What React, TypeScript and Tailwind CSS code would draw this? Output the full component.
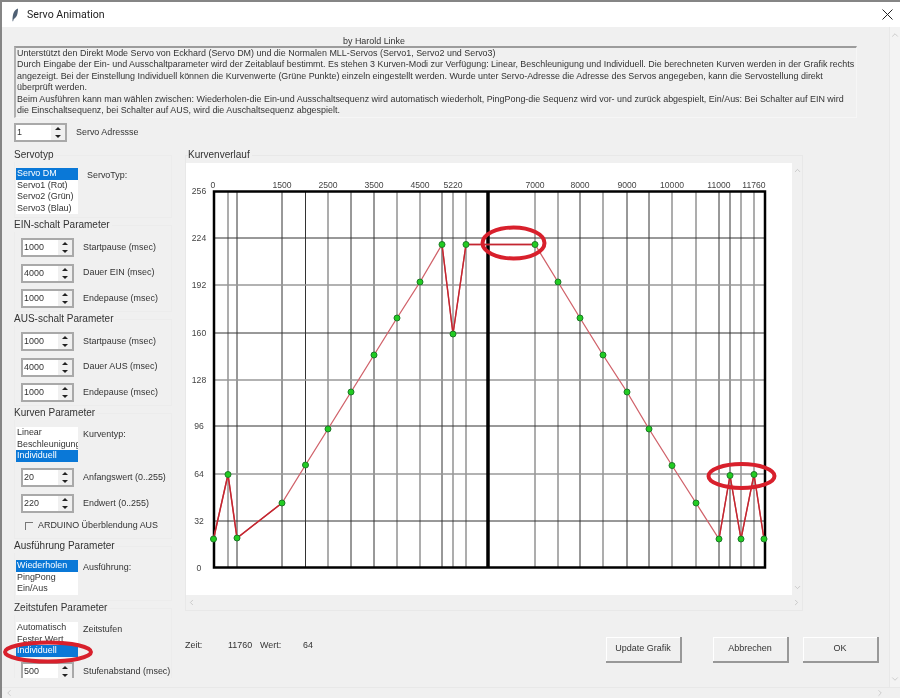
import React from 'react';
import { ChevronDown, ChevronLeft, ChevronRight, ChevronUp } from 'lucide-react';

const description = [
  'Unterstützt den Direkt Mode Servo von Eckhard (Servo DM) und die Normalen MLL-Servos (Servo1, Servo2 und Servo3)',
  'Durch Eingabe der Ein- und Ausschaltparameter wird der Zeitablauf bestimmt. Es stehen 3 Kurven-Modi zur Verfügung: Linear, Beschleunigung und Individuell. Die berechneten Kurven werden in der Grafik rechts',
  'angezeigt. Bei der Einstellung Individuell können die Kurvenwerte (Grüne Punkte) einzeln eingestellt werden. Wurde unter Servo-Adresse die Adresse des Servos angegeben, kann die Servostellung direkt',
  'überprüft werden.',
  'Beim Ausführen kann man wählen zwischen: Wiederholen-die Ein-und Ausschaltsequenz wird automatisch wiederholt, PingPong-die Sequenz wird vor- und zurück abgespielt, Ein/Aus: Bei Schalter auf EIN wird',
  'die Einschaltsequenz, bei Schalter auf AUS, wird die Auschaltsequenz abgespielt.'
];

// x position, dark = thin black line, otherwise the thick grey one
const verticals: [number, boolean][] = [
  [228, false], [237, true], [282, true], [305.5, true], [328, false], [351, true], [374, true], [397, false],
  [420, false], [442, true], [453, false], [466, false], [535, false], [558, false], [580, true], [603, false],
  [627, true], [649, true], [672, false], [696, false], [719, true], [730, true], [741, false], [754, false]
];
const horizontals: [number, boolean, string][] = [
  [238, true, '224'], [285, false, '192'], [333, true, '160'], [380, false, '128'],
  [426, true, '96'], [474, false, '64'], [521, true, '32']
];
const topLabels: [number, string][] = [
  [213, '0'], [282, '1500'], [328, '2500'], [374, '3500'], [420, '4500'], [453, '5220'],
  [535, '7000'], [580, '8000'], [627, '9000'], [672, '10000'], [719, '11000'], [754, '11760']
];
const points: [number, number][] = [
  [213.5, 539], [228, 474.5], [237, 538], [282, 503], [305.5, 465], [328, 429], [351, 392], [374, 355], [397, 318],
  [420, 282], [442, 244.5], [453, 334], [466, 244.5], [535, 244.5], [558, 282], [580, 318], [603, 355], [627, 392],
  [649, 429], [672, 465.5], [696, 503], [719, 539], [730, 475.5], [741, 539], [754, 474.5], [764, 539]
];

const toPolyline = (list: [number, number][]) => list.map(([x, y]) => `${x},${y}`).join(' ');

const Spin: React.FC<{ value: string; className?: string }> = ({ value, className = '' }) => (
  <div className={`flex h-[19px] w-[53px] shrink-0 border-2 border-[#a9a9a9] bg-white ${className}`}>
    <div className="flex-1 pl-[1px] leading-[15px]">{value}</div>
    <div className="flex w-[14px] flex-col justify-between bg-[#f0f0f0]">
      <div className="mx-auto mt-[2px] h-0 w-0 border-x-[3px] border-b-[3px] border-x-transparent border-b-[#222]" />
      <div className="mx-auto mb-[2px] h-0 w-0 border-x-[3px] border-t-[3px] border-x-transparent border-t-[#222]" />
    </div>
  </div>
);

const SpinRow: React.FC<{ value: string; label: string; className?: string }> = ({ value, label, className = '' }) => (
  <div className={`ml-[6px] flex items-center gap-[9px] ${className}`}>
    <Spin value={value} />
    <span className="whitespace-nowrap">{label}</span>
  </div>
);

const ListRow: React.FC<{ items: string[]; selected: number; label: string; heightClass: string; labelClass?: string }> = ({
  items,
  selected,
  label,
  heightClass,
  labelClass = 'ml-[5px]'
}) => (
  <div className="ml-[1px] flex items-start">
    <div className={`w-[62px] overflow-hidden bg-white leading-[11.7px] ${heightClass}`}>
      {items.map((item, i) => (
        <div key={item} className={`whitespace-nowrap pl-[1px] ${i === selected ? 'bg-[#0a78d7] text-white' : ''}`}>
          {item}
        </div>
      ))}
    </div>
    <span className={`mt-[1px] whitespace-nowrap ${labelClass}`}>{label}</span>
  </div>
);

const Group: React.FC<{ title: string; bodyClass: string; children: React.ReactNode }> = ({
  title,
  bodyClass,
  children
}) => (
  <div>
    <div className="relative z-10 h-[14px] w-fit bg-[#f0f0f0] pr-[2px] text-[10px] leading-[14px]">{title}</div>
    <div className={`-mt-[7px] border border-[#ececec] ${bodyClass}`}>{children}</div>
  </div>
);

const Button: React.FC<{ label: string }> = ({ label }) => (
  <button className="h-[26px] w-[76px] border-r-2 border-b-2 border-[#989898] bg-[#f0f0f0] text-[9px] text-[#333] shadow-[inset_1px_1px_0_#fff]">
    {label}
  </button>
);

const Curve: React.FC = () => (
  <svg width="606" height="432" viewBox="186 163 606 432" className="block">
    {verticals.map(([x, dark]) => (
      <line key={x} x1={x} x2={x} y1="191" y2="568" stroke={dark ? '#333' : '#999'} strokeWidth={dark ? 1 : 1.6} />
    ))}
    {horizontals.map(([y, dark]) => (
      <line key={y} x1="213" x2="765" y1={y} y2={y} stroke={dark ? '#333' : '#999'} strokeWidth={dark ? 1 : 1.6} />
    ))}
    <rect x="214" y="191.5" width="551" height="376" fill="none" stroke="#000" strokeWidth="2.5" />
    <line x1="488" x2="488" y1="191" y2="568" stroke="#000" strokeWidth="3.5" />

    <g fontSize="8.6" fill="#444" textAnchor="middle">
      {topLabels.map(([x, t]) => (
        <text key={t} x={x} y="188">{t}</text>
      ))}
      <text x="199" y="194">256</text>
      {horizontals.map(([y, , t]) => (
        <text key={t} x="199" y={y + 3}>{t}</text>
      ))}
      <text x="199" y="571">0</text>
    </g>

    <polyline points={toPolyline(points)} fill="none" stroke="#d0626a" strokeWidth="1.3" />
    <polyline points={toPolyline(points.slice(0, 4))} fill="none" stroke="#c42630" strokeWidth="1.5" />
    <polyline points={toPolyline(points.slice(10, 14))} fill="none" stroke="#c42630" strokeWidth="1.4" />
    <polyline points={toPolyline(points.slice(21))} fill="none" stroke="#c42630" strokeWidth="1.4" />
    {points.map(([x, y]) => (
      <circle key={`${x}-${y}`} cx={x} cy={y} r="3" fill="#22cc22" stroke="#1d7a28" strokeWidth="1" />
    ))}

    <ellipse cx="513.5" cy="243" rx="31" ry="15.5" fill="none" stroke="#d8202c" strokeWidth="4" />
    <ellipse cx="741.5" cy="476" rx="33" ry="12" fill="none" stroke="#d8202c" strokeWidth="4" />
  </svg>
);

export default function App() {
  return (
    <div className="relative h-[698px] w-[900px] overflow-hidden border-t-2 border-l-2 border-[#858585] bg-[#f0f0f0] font-['Liberation_Sans',Arial,sans-serif] text-[8.93px] text-[#333] blur-[0.4px]">
      {/* title bar */}
      <div className="flex h-[25px] items-center bg-white pl-[10px]">
        <svg width="7" height="14" viewBox="0 0 7 14" className="mt-[1px]">
          <path d="M0.5 13 C0.5 7 1.5 2 6 0.5 C6 5 5 9.5 1.8 11 L1 13.5 Z" fill="#4f6074" />
        </svg>
        <span className="ml-[8px] font-['Roboto',sans-serif] text-[10.6px] text-[#222]">Servo Animation</span>
        <svg width="11" height="11" viewBox="0 0 11 11" className="ml-auto mr-[7px]">
          <path d="M0.5 0.5 L10.5 10.5 M10.5 0.5 L0.5 10.5" stroke="#222" strokeWidth="1" />
        </svg>
      </div>

      <div className="flex h-[660px]">
        {/* dialog content */}
        <div className="h-[660px] w-[887px] overflow-hidden pl-[12px]">
          <div className="h-[19px] pl-[329px] pt-[9px] leading-[11px]">by Harold Linke</div>
          <div className="h-[72px] w-[843px] border-t-2 border-l-2 border-r border-b border-t-[#9c9c9c] border-l-[#b0b0b0] border-r-[#f6f6f6] border-b-[#f6f6f6] pl-[1px] leading-[11.4px]">
            {description.map((line) => (
              <div key={line} className="whitespace-nowrap">{line}</div>
            ))}
          </div>
          <div className="mt-[5px] flex items-center gap-[9px]">
            <Spin value="1" />
            <span>Servo Adressse</span>
          </div>

          <div className="mt-[6px] flex items-start gap-[13px]">
            {/* parameter column */}
            <div className="h-[530px] w-[158px] shrink-0 overflow-hidden">
              <Group title="Servotyp" bodyClass="pt-[12px] pb-[3px]">
                <ListRow items={['Servo DM', 'Servo1 (Rot)', 'Servo2 (Grün)', 'Servo3 (Blau)']} selected={0} label="ServoTyp:" heightClass="h-[46px]" labelClass="ml-[9px]" />
              </Group>
              <Group title="EIN-schalt Parameter" bodyClass="pt-[12px] pb-[3px]">
                <SpinRow value="1000" label="Startpause (msec)" />
                <SpinRow value="4000" label="Dauer EIN (msec)" className="mt-[6.5px]" />
                <SpinRow value="1000" label="Endepause (msec)" className="mt-[6.5px]" />
              </Group>
              <Group title="AUS-schalt Parameter" bodyClass="pt-[12px] pb-[3px]">
                <SpinRow value="1000" label="Startpause (msec)" />
                <SpinRow value="4000" label="Dauer AUS (msec)" className="mt-[6.5px]" />
                <SpinRow value="1000" label="Endepause (msec)" className="mt-[6.5px]" />
              </Group>
              <Group title="Kurven Parameter" bodyClass="pt-[13px] pb-[6px]">
                <ListRow items={['Linear', 'Beschleunigung', 'Individuell']} selected={2} label="Kurventyp:" heightClass="h-[35px]" />
                <SpinRow value="20" label="Anfangswert (0..255)" className="mt-[6px]" />
                <SpinRow value="220" label="Endwert (0..255)" className="mt-[7px]" />
                <div className="ml-[10px] mt-[7px] flex h-[12px] items-center gap-[5px]">
                  <div className="h-[8px] w-[8px] border-t border-l border-[#777]" />
                  <span className="whitespace-nowrap">ARDUINO Überblendung AUS</span>
                </div>
              </Group>
              <Group title="Ausführung Parameter" bodyClass="pt-[13px] pb-[5px]">
                <ListRow items={['Wiederholen', 'PingPong', 'Ein/Aus']} selected={0} label="Ausführung:" heightClass="h-[35px]" />
              </Group>
              <Group title="Zeitstufen Parameter" bodyClass="pt-[13px] pb-[3px]">
                <ListRow items={['Automatisch', 'Fester Wert', 'Individuell']} selected={2} label="Zeitstufen" heightClass="h-[35px]" />
                <SpinRow value="500" label="Stufenabstand (msec)" className="mt-[5px]" />
              </Group>
            </div>

            {/* curve column */}
            <div className="w-[694px] shrink-0">
              <div className="relative z-10 ml-[3px] h-[14px] w-fit bg-[#f0f0f0] pr-[2px] text-[10px] leading-[14px]">Kurvenverlauf</div>
              <div className="-mt-[7px] w-[618px] border border-[#e8e8e8] pt-[7px]">
                <div className="flex">
                  <div className="h-[432px] w-[606px] bg-white">
                    <Curve />
                  </div>
                  <div className="flex w-[10px] flex-col items-center justify-between py-[3px] text-[#bdbdbd]">
                    <ChevronUp size={9} />
                    <ChevronDown size={9} />
                  </div>
                </div>
                <div className="flex h-[15px] items-center justify-between pl-[1px] pr-[1px] text-[#bdbdbd]">
                  <ChevronLeft size={9} />
                  <ChevronRight size={9} />
                </div>
              </div>

              <div className="mt-[26px] flex h-[26px] items-start">
                <div className="flex pt-[3px] leading-[11px]">
                  <span className="w-[43px]">Zeit:</span>
                  <span className="w-[32px]">11760</span>
                  <span className="w-[43px]">Wert:</span>
                  <span>64</span>
                </div>
                <div className="ml-auto flex">
                  <Button label="Update Grafik" />
                  <div className="ml-[31px]"><Button label="Abbrechen" /></div>
                  <div className="ml-[14px]"><Button label="OK" /></div>
                </div>
              </div>
            </div>
          </div>
        </div>

        {/* outer vertical scrollbar */}
        <div className="flex w-[11px] flex-col items-center justify-between border-l border-[#e8e8e8] bg-[#f3f3f3] py-[3px] text-[#c4c4c4]">
          <ChevronUp size={10} />
          <ChevronDown size={10} />
        </div>
      </div>

      {/* outer horizontal scrollbar */}
      <div className="flex h-[11px] items-center justify-between border-t border-[#e8e8e8] pl-[2px] pr-[15px] text-[#c4c4c4]">
        <ChevronLeft size={10} />
        <ChevronRight size={10} />
      </div>

      {/* hand-drawn marker over the Zeitstufen list */}
      <svg width="94" height="30" viewBox="0 0 94 30" className="pointer-events-none absolute left-0 top-[635px]">
        <ellipse cx="46" cy="15" rx="43" ry="9.5" fill="none" stroke="#d8202c" strokeWidth="4" />
      </svg>
    </div>
  );
}
